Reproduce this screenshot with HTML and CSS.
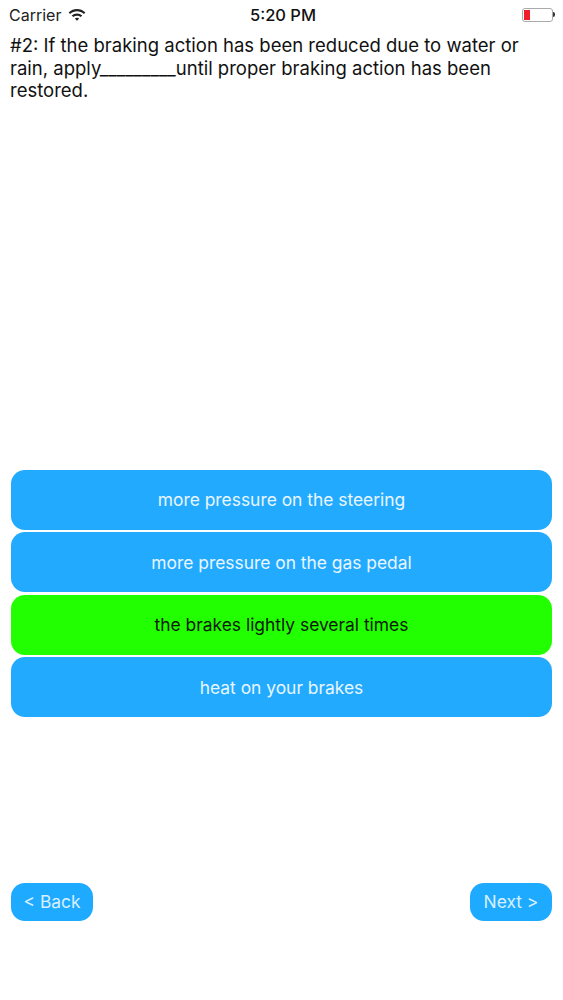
FILE: index.html
```html
<!DOCTYPE html>
<html lang="en">
<head>
<meta charset="utf-8">
<title>Quiz</title>
<link rel="stylesheet" href="styles.css">
</head>
<body>
<main class="screen">
  <header class="status">
    <div class="status-left">
      <span>Carrier</span>
      <svg class="wifi" viewBox="0 0 18 13" width="18" height="13" aria-hidden="true">
        <path d="M.6 4.4C5.4-.1 12.6-.1 17.4 4.4l-1.5 1.6C11.9 2.4 6.1 2.4 2.1 6z"/>
        <path d="M3.7 7.5c3.1-2.8 7.5-2.8 10.6 0l-1.6 1.6c-2.2-1.9-5.2-1.9-7.4 0z"/>
        <path d="M6.8 10.4c1.3-1 3.1-1 4.4 0L9 12.8z"/>
      </svg>
    </div>
    <div class="status-time">5:20 PM</div>
    <div class="status-right">
      <div class="battery"><div class="battery-level"></div></div>
      <div class="battery-tip"></div>
    </div>
  </header>
  <p class="question">#2: If the braking action has been reduced due to water or rain, apply_________until proper braking action has been restored.</p>
  <section class="answers">
    <button class="answer">more pressure on the steering</button>
    <button class="answer">more pressure on the gas pedal</button>
    <button class="answer answer-correct">the brakes lightly several times</button>
    <button class="answer">heat on your brakes</button>
  </section>
  <nav class="nav">
    <button class="nav-btn">&lt; Back</button>
    <button class="nav-btn">Next &gt;</button>
  </nav>
</main>
</body>
</html>
```
FILE: styles.css
```css
* { box-sizing: border-box; }
html, body { margin: 0; padding: 0; background: #fff; }
.screen {
  width: 563px;
  height: 1000px;
  display: flex;
  flex-direction: column;
  font-family: "Inter", "Liberation Sans", sans-serif;
  color: #111;
}
.status {
  height: 29px;
  flex: none;
  padding: 0 8px 0 9px;
  display: grid;
  grid-template-columns: 1fr auto 1fr;
  align-items: center;
  font-size: 16px;
  color: #222;
}
.status-left { display: flex; align-items: center; gap: 7px; }
.wifi { fill: #222; }
.status-time { font-size: 16.5px; font-weight: 500; color: #111; margin-left: 2px; }
.status-right { display: flex; align-items: center; justify-content: flex-end; }
.battery {
  width: 31px;
  height: 14px;
  border: 1px solid #aaa;
  border-radius: 3px;
  padding: 1px;
}
.battery-level { width: 6px; height: 100%; background: #f01c2c; }
.battery-tip { width: 2px; height: 5px; background: #333; border-radius: 0 2px 2px 0; }
.question {
  margin: 5px 0 0;
  padding: 0 30px 0 10px;
  font-size: 18.5px;
  line-height: 22.5px;
  height: 68px;
  flex: none;
}
.answers {
  margin-top: 368px;
  padding: 0 11px;
  display: flex;
  flex-direction: column;
  gap: 2.6px;
}
.answer {
  height: 59.8px;
  border: 0;
  border-radius: 14px;
  background: #22aaff;
  color: #e8f6ff;
  font: inherit;
  font-size: 17.4px;
}
.answer-correct { background: #22ff00; color: #0c1a0a; }
.nav {
  margin-top: 166px;
  padding: 0 11px;
  display: flex;
  justify-content: space-between;
}
.nav-btn {
  width: 82px;
  height: 38px;
  border: 0;
  border-radius: 14px;
  background: #1eaaff;
  color: #d8f0ff;
  font: inherit;
  font-size: 17.4px;
}
```
